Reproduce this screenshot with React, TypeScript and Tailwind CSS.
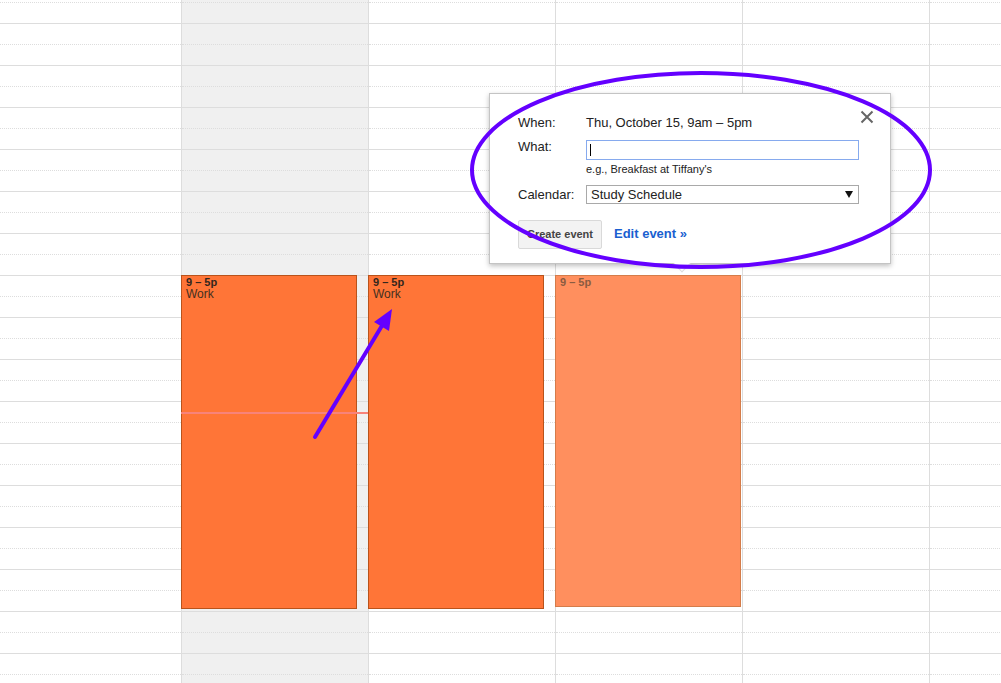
import React from 'react';

const HOURS = Array.from({length: 17}, (_, i) => i);

function HourRows() {
  return (
    <>
      {HOURS.map((h) => (
        <div key={h}>
          <div className="h-[21px] border-b border-dotted border-[#dddddd]" />
          <div className="h-[21px] border-b border-solid border-[#dddddd]" />
        </div>
      ))}
    </>
  );
}

function EventBlock({title, ghost, wide}: {title?: string; ghost?: boolean; wide?: boolean}) {
  return (
    <div
      className={
        'absolute -left-px top-[293px] border px-[4px] ' +
        (wide ? 'w-[186px] ' : 'w-[176px] ') +
        (ghost
          ? 'h-[332px] bg-[#ff8f5e] border-[#d47c4a] text-[#8a5b41]'
          : 'h-[334px] bg-[#ff7537] border-[#b9531b] text-[#33261d]')
      }
    >
      <div className="text-[11px] font-bold leading-[12px]">9 – 5p</div>
      {title && <div className="text-[12px] leading-[12px] text-[#45301f]">{title}</div>}
    </div>
  );
}

function Popup() {
  return (
    <div className="absolute left-[489px] top-[93px] w-[402px] h-[171px] bg-white border border-[#c4c4c4] shadow-[0_2px_5px_rgba(0,0,0,0.25)] text-[13px] text-[#222] pl-[28px] pt-[21px]">
      <svg className="absolute right-[16px] top-[16px]" width="14" height="14" viewBox="0 0 14 14">
        <path d="M1.5 1.5L12.5 12.5M12.5 1.5L1.5 12.5" stroke="#666" strokeWidth="2" />
      </svg>
      <div className="flex h-[16px] items-center">
        <div className="w-[68px]">When:</div>
        <div>Thu, October 15, 9am – 5pm</div>
      </div>
      <div className="flex mt-[9px]">
        <div className="w-[68px] leading-[14px]">What:</div>
        <div>
          <div className="relative w-[273px] h-[20px] border border-[#86aaee]">
            <div className="absolute left-[3px] top-[3px] w-px h-[12px] bg-black" />
          </div>
          <div className="text-[11px] leading-[14px] mt-[2px]">e.g., Breakfast at Tiffany's</div>
        </div>
      </div>
      <div className="flex items-center mt-[9px]">
        <div className="w-[68px]">Calendar:</div>
        <div className="flex items-center justify-between w-[273px] h-[19px] border border-[#a9a9a9] pl-[4px] pr-[5px]">
          <span>Study Schedule</span>
          <svg width="8" height="7" viewBox="0 0 8 7">
            <path d="M0 0H8L4 7Z" fill="#111" />
          </svg>
        </div>
      </div>
      <div className="flex items-center mt-[15px]">
        <button className="h-[29px] w-[84px] rounded-[2px] border border-[#d9d9d9] bg-[#f3f3f3] text-[11px] font-bold text-[#444]">
          Create event
        </button>
        <a className="ml-[12px] text-[13px] font-bold text-[#1a5fd0] cursor-pointer">Edit event »</a>
      </div>
      <div className="absolute left-[186px] -bottom-[7px] w-[12px] h-[12px] rotate-45 bg-white border-r border-b border-[#dcdcdc]" />
    </div>
  );
}

export default function App() {
  return (
    <div className="relative w-full h-[683px] overflow-hidden bg-white font-['Liberation_Sans',Arial,sans-serif]">
      <div className="flex -mt-[18px]">
        <div className="w-[181px] shrink-0">
          <HourRows />
        </div>
        <div className="relative w-[187px] shrink-0 border-l border-[#dddddd] bg-[#f0f0f0]">
          <HourRows />
          <EventBlock title="Work" />
          <div className="absolute -left-px top-[430px] w-[188px] h-[2px] bg-[#f8837a]" />
        </div>
        <div className="relative w-[187px] shrink-0 border-l border-[#dddddd]">
          <HourRows />
          <EventBlock title="Work" />
        </div>
        <div className="relative w-[187px] shrink-0 border-l border-[#dddddd]">
          <HourRows />
          <EventBlock ghost wide />
        </div>
        <div className="w-[187px] shrink-0 border-l border-[#dddddd]">
          <HourRows />
        </div>
        <div className="w-[187px] shrink-0 border-l border-[#dddddd]">
          <HourRows />
        </div>
      </div>

      <Popup />

      <svg className="absolute inset-0 pointer-events-none" width="1001" height="683" viewBox="0 0 1001 683">
        <ellipse cx="701" cy="170" rx="229" ry="97" fill="none" stroke="#6400ff" strokeWidth="4" />
        <line x1="315" y1="437" x2="383" y2="324" stroke="#6400ff" strokeWidth="4" strokeLinecap="round" />
        <polygon points="392,309 374,322 389,331" fill="#6400ff" />
      </svg>
    </div>
  );
}
